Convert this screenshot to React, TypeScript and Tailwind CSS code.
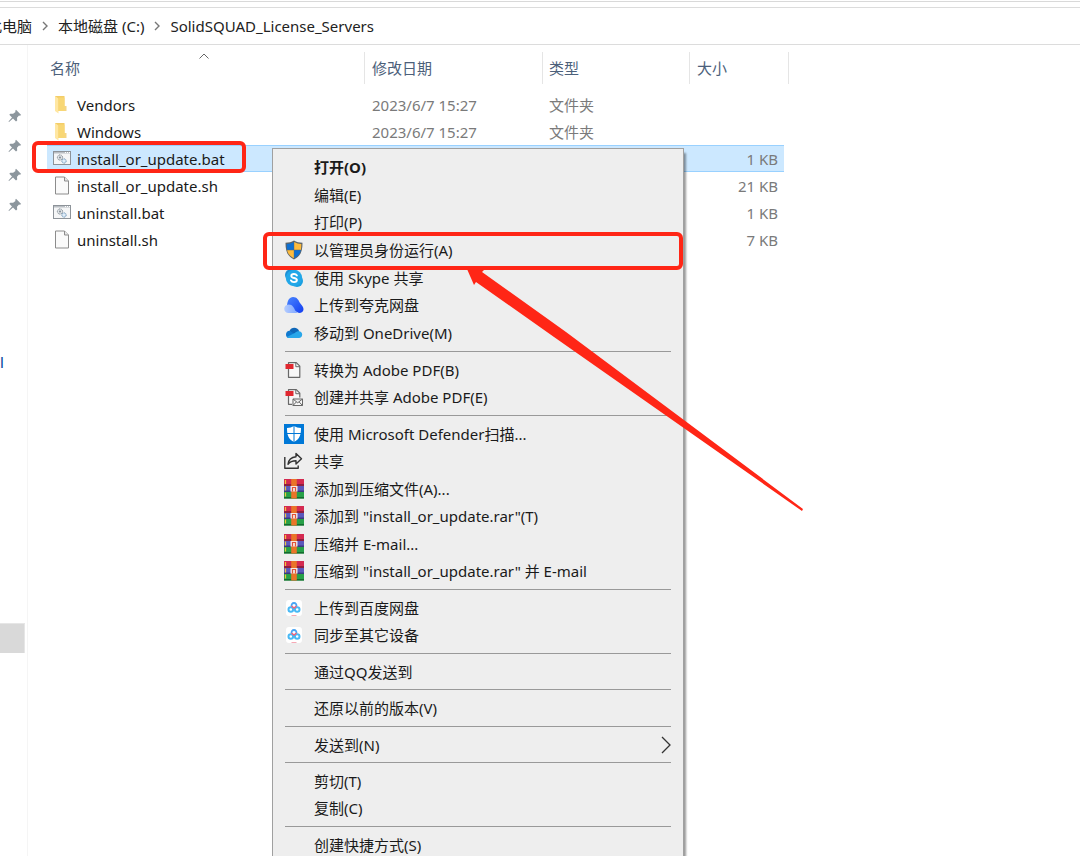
import React from 'react';

type FileRow = { name: string; kind: 'folder' | 'bat' | 'doc'; date?: string; type?: string; size?: string; selected?: boolean };

const files: FileRow[] = [
  { name: 'Vendors', kind: 'folder', date: '2023/6/7 15:27', type: '文件夹' },
  { name: 'Windows', kind: 'folder', date: '2023/6/7 15:27', type: '文件夹' },
  { name: 'install_or_update.bat', kind: 'bat', size: '1 KB', selected: true },
  { name: 'install_or_update.sh', kind: 'doc', size: '21 KB' },
  { name: 'uninstall.bat', kind: 'bat', size: '1 KB' },
  { name: 'uninstall.sh', kind: 'doc', size: '7 KB' },
];

const FolderIcon = () => (
  <svg width="18" height="19" viewBox="0 0 18 19">
    <path d="M2 1h9.500v15H2z" fill="#f3cd68" />
    <path d="M11 11h2.500v5H11z" fill="#f5d583" />
    <path d="M2 1 5.500 3.500v15L2 16z" fill="#ffe7a2" />
    <path d="M5.500 2.500h6V16h-6z" fill="#f8d775" />
  </svg>
);

const BatIcon = () => (
  <svg width="18" height="19" viewBox="0 0 18 19">
    <rect x="0.500" y="2.500" width="17" height="13" fill="#f5f6f7" stroke="#8d9399" />
    <path d="M1 3h16v1.500H1z" fill="#b9bec3" />
    <path d="M12 3.500h1M14 3.500h1M16 3.500h1" stroke="#fff" />
    <circle cx="7" cy="8.500" r="2.600" fill="#dfe4e8" stroke="#7d868e" strokeDasharray="1.200 0.600" />
    <circle cx="7" cy="8.500" r="0.900" fill="#77818a" />
    <circle cx="11" cy="12" r="2.200" fill="#cfe2f3" stroke="#7397b5" strokeDasharray="1.200 0.600" />
    <circle cx="11" cy="12" r="0.700" fill="#fff" />
  </svg>
);

const DocIcon = () => (
  <svg width="18" height="19" viewBox="0 0 18 19">
    <path d="M2.500 1h9l4 4v13h-13z" fill="#fafafa" stroke="#8c8c8c" />
    <path d="M11.500 1v4h4" fill="#e8e8e8" stroke="#8c8c8c" />
  </svg>
);

const ShieldIcon = () => (
  <svg width="20" height="20" viewBox="0 0 20 20">
    <path d="M10 .5c2.500 1.500 5.200 2.200 8.500 2.200 0 8-1.500 13.300-8.500 16.800C3 16 1.500 10.700 1.500 2.700 4.800 2.700 7.500 2 10 .5z" fill="#5d6468" />
    <path d="M9.800 2v7.800H3C2.800 8 2.700 6 2.700 4 5.500 3.900 7.600 3.200 9.800 2z" fill="#0f6fd1" />
    <path d="M10.200 2v7.800H17c.2-1.800.3-3.800.3-5.800-2.800-.1-4.900-.8-7.100-2z" fill="#fdbb3d" />
    <path d="M9.800 10.200v8C6 16.200 3.900 13.800 3.100 10.200z" fill="#fdbb3d" />
    <path d="M10.200 10.200v8c3.800-2 5.900-4.400 6.700-8z" fill="#0f6fd1" />
  </svg>
);

const SkypeIcon = () => (
  <svg width="20" height="20" viewBox="0 0 20 20">
    <circle cx="7" cy="7" r="6" fill="#1b8fd6" />
    <circle cx="13" cy="13" r="6" fill="#1a9fe0" />
    <circle cx="10" cy="10" r="8.200" fill="#22a7e8" />
    <path d="M12.900 7.400C12.200 6.300 11.200 6 10 6 8.400 6 7.300 6.700 7.300 7.900c0 2.900 5.600 1.300 5.600 4.200 0 1.300-1.300 2-2.900 2-1.500 0-2.600-.6-3.100-1.700" fill="none" stroke="#fff" strokeWidth="1.900" strokeLinecap="round" />
  </svg>
);

const QuarkIcon = () => (
  <svg width="20" height="20" viewBox="0 0 20 20">
    <defs>
      <linearGradient id="quark" x1="0" y1="0" x2="1" y2="1">
        <stop offset="0" stopColor="#4a86ff" />
        <stop offset="1" stopColor="#123df0" />
      </linearGradient>
      <linearGradient id="quarkLight" x1="0" y1="0" x2="1" y2="0">
        <stop offset="0" stopColor="#b4ccff" />
        <stop offset="1" stopColor="#7ea6ff" />
      </linearGradient>
    </defs>
    <path d="M3 12C3 5.500 5.500 2 9 2c4 0 5.500 3 7 6 2 2.500 3.500 4 3.500 6.300 0 2.200-1.800 3.700-4.500 3.700z" fill="url(#quark)" />
    <path d="M4.500 9.500c2.800 0 4 1 5.500 3.500 1.200 2.300 2 4.500 4 5H4.500C2 18 .2 16.500.2 13.800c0-2.400 1.800-4.200 4.300-4.300z" fill="url(#quarkLight)" />
  </svg>
);

const OneDriveIcon = () => (
  <svg width="20" height="20" viewBox="0 0 20 20">
    <path d="M5.500 8C6.400 5.800 8.200 4.800 10.200 4.800c2.500 0 4.300 1.400 5 3.600L10 13z" fill="#0f67b8" />
    <path d="M5.500 7.800 12.500 12 5 15C3.200 15 2 13.500 2 11.500 2 9.300 3.500 7.900 5.500 7.800z" fill="#1179cf" />
    <path d="M14.800 8.300c2 .1 3.400 1.400 3.400 3.300 0 2-1.400 3.400-3.200 3.400H5c-.9 0-1.700-.3-2.200-1l8-4c1.200-1.100 2.400-1.700 4-1.700z" fill="#29a7ea" />
  </svg>
);

const PdfIcon = ({ mail }: { mail?: boolean }) => (
  <svg width="20" height="20" viewBox="0 0 20 20">
    <path d="M4.500 17.300V2.700h7.800l3.500 3.500v11.100z" fill="#f7f7f7" stroke="#686868" strokeLinejoin="round" strokeWidth="1.200" />
    <path d="M11.800 2.700v4h4" fill="none" stroke="#686868" />
    <path d="M1.500 4h8v5h-8z" fill="#e0272f" />
    {mail && (
      <g>
        <path d="M8 10.500h11v9H8z" fill="#ededed" />
        <path d="M9 12h9.500v6.500H9zM9 12l4.700 3.800L18.500 12M9 18.500l3.300-3.500M18.500 18.500 15.200 15" fill="#f7f7f7" stroke="#686868" />
      </g>
    )}
  </svg>
);

const DefenderIcon = () => (
  <svg width="20" height="20" viewBox="0 0 20 20">
    <path d="M0 0h20v20H0z" fill="#0078d7" />
    <path d="M10 2c2 1.300 4.300 2 7 2 0 6.500-1 11-7 14C4 15 3 10.500 3 4c2.700 0 5-.7 7-2z" fill="#fff" />
    <path d="M10 2v16M3 9.500h14" stroke="#0078d7" />
  </svg>
);

const ShareIcon = () => (
  <svg width="20" height="20" viewBox="0 0 20 20" fill="none" stroke="#333" strokeWidth="1.400" strokeLinejoin="round">
    <path d="M.8 6v11.300h13.400v-2.800" />
    <path d="M12 2.500 17.500 7.800 12 13v-3.200c-3.500 0-6 .9-8 3.500.5-4.700 3.500-7.200 8-7.600z" />
  </svg>
);

const RarIcon = () => (
  <svg width="20" height="20" viewBox="0 0 20 20">
    <path d="M0 0h20v7H0z" fill="#d42a50" />
    <path d="M0 5h20v2H0z" fill="#8e1f40" />
    <path d="M0 7h20v6H0z" fill="#5b58bd" />
    <path d="M0 11.500h20V13H0z" fill="#3b3a80" />
    <path d="M0 13h20v6.500H0z" fill="#27a048" />
    <path d="M0 18h20v1.500H0z" fill="#166a2f" />
    <path d="M1.500 1v4M1.500 7.500v4M1.500 13.500v4" stroke="#f0c43c" strokeWidth="1.200" />
    <path d="M7.200 0h5.600v19.500H7.200z" fill="#ea7428" />
    <path d="M6.500 7h7v5.500h-7z" fill="#f4e9e2" />
    <path d="M8.500 12.500V8.500h3v4" fill="none" stroke="#e0523a" strokeWidth="1.200" />
  </svg>
);

const BaiduIcon = () => (
  <svg width="20" height="20" viewBox="0 0 20 20">
    <rect x="2" y="2" width="16" height="16" rx="3" fill="#fff" />
    <circle cx="6.800" cy="11.500" r="2.300" fill="none" stroke="#48b9f5" strokeWidth="2" />
    <circle cx="13.200" cy="11.500" r="2.300" fill="none" stroke="#48b9f5" strokeWidth="2" />
    <path d="M7.600 8.200a2.500 2.500 0 1 1 4.800 0" fill="none" stroke="#48a5f5" strokeWidth="1.800" />
    <path d="m7.500 8 2.500 2 2.500-2" fill="none" stroke="#f0637c" strokeWidth="1.600" />
    <path d="M7.500 17.500h5" stroke="#f6a9b5" />
  </svg>
);

const PinIcon = () => (
  <svg width="14" height="14" viewBox="0 0 14 14">
    <path d="M8 .8 13.200 6l-1.400.7-.8-.3-2 2.300.2 2.800-1.200 1L5 9.600 1 13l-.5-.5L4 8.500 1.300 5.800l1-1.100 2.800.1L7.500 3 7.200 2z" fill="#8c969d" />
  </svg>
);

const fileIcons = { folder: <FolderIcon />, bat: <BatIcon />, doc: <DocIcon /> };

type Item = { label: string; icon?: React.ReactNode; bold?: boolean; submenu?: boolean };

const groups: { height: string; items: Item[] }[] = [
  {
    height: 'h-[194px]',
    items: [
      { label: '打开(O)', bold: true },
      { label: '编辑(E)' },
      { label: '打印(P)' },
      { label: '以管理员身份运行(A)', icon: <ShieldIcon /> },
      { label: '使用 Skype 共享', icon: <SkypeIcon /> },
      { label: '上传到夸克网盘', icon: <QuarkIcon /> },
      { label: '移动到 OneDrive(M)', icon: <OneDriveIcon /> },
    ],
  },
  {
    height: 'h-[55px]',
    items: [
      { label: '转换为 Adobe PDF(B)', icon: <PdfIcon /> },
      { label: '创建并共享 Adobe PDF(E)', icon: <PdfIcon mail /> },
    ],
  },
  {
    height: 'h-[165px]',
    items: [
      { label: '使用 Microsoft Defender扫描...', icon: <DefenderIcon /> },
      { label: '共享', icon: <ShareIcon /> },
      { label: '添加到压缩文件(A)...', icon: <RarIcon /> },
      { label: '添加到 "install_or_update.rar"(T)', icon: <RarIcon /> },
      { label: '压缩并 E-mail...', icon: <RarIcon /> },
      { label: '压缩到 "install_or_update.rar" 并 E-mail', icon: <RarIcon /> },
    ],
  },
  {
    height: 'h-[55px]',
    items: [
      { label: '上传到百度网盘', icon: <BaiduIcon /> },
      { label: '同步至其它设备', icon: <BaiduIcon /> },
    ],
  },
  { height: 'h-[27px]', items: [{ label: '通过QQ发送到' }] },
  { height: 'h-7', items: [{ label: '还原以前的版本(V)' }] },
  { height: 'h-[27px]', items: [{ label: '发送到(N)', submenu: true }] },
  { height: 'h-[55px]', items: [{ label: '剪切(T)' }, { label: '复制(C)' }] },
  { height: 'h-[27px]', items: [{ label: '创建快捷方式(S)' }] },
];

const Crumb = () => (
  <svg width="6" height="10" viewBox="0 0 6 10" fill="none" stroke="#777" strokeWidth="1.400">
    <path d="m1 1 4 4-4 4" />
  </svg>
);

const AddressBar = () => (
  <header className="mt-px border-t border-[#d9d9d9] pt-[5px]">
    <nav className="flex h-[38px] items-center gap-[10px] border-y border-[#dcdcdc] text-[#222]">
      <button className="-ml-[13px]">此电脑</button>
      <Crumb />
      <button>本地磁盘 (C:)</button>
      <Crumb />
      <button>SolidSQUAD_License_Servers</button>
    </nav>
  </header>
);

const Sidebar = () => (
  <aside className="flex w-7 shrink-0 flex-col border-r border-[#f5f5f5]">
    <div className="mt-16 flex h-[103px] flex-col justify-between pl-2">
      <PinIcon />
      <PinIcon />
      <PinIcon />
      <PinIcon />
    </div>
    <span className="mt-[140px] leading-5 text-[#003d99]">l</span>
    <div className="mt-[251px] h-[30px] w-[25px] border-t border-r border-[#e6e6e6] bg-[#d9d9d9]" />
  </aside>
);

const FileTable = () => (
  <table className="ml-[19px] w-[742px] table-fixed self-start">
    <colgroup>
      <col className="w-[318px]" />
      <col className="w-[178px]" />
      <col className="w-[147px]" />
      <col className="w-[94px]" />
      <col className="w-[5px]" />
    </colgroup>
    <thead className="text-left text-[#4c607a]">
      <tr className="h-[46px] align-top">
        <th className="relative p-0 pt-[7px] font-normal">
          <button className="flex h-8 w-full items-center border-r border-[#e5e5e5] pl-[3px]">名称</button>
          <svg className="absolute top-2 left-[152px]" width="10" height="6" viewBox="0 0 10 6" fill="none" stroke="#666">
            <path d="m.5 5.500 4.500-4.500 4.500 4.500" />
          </svg>
        </th>
        <th className="p-0 pt-[7px] font-normal">
          <button className="flex h-8 w-full items-center border-r border-[#e5e5e5] pl-[7px]">修改日期</button>
        </th>
        <th className="p-0 pt-[7px] font-normal">
          <button className="flex h-8 w-full items-center border-r border-[#e5e5e5] pl-[6px]">类型</button>
        </th>
        <th className="p-0 pt-[7px] font-normal">
          <button className="flex h-8 w-full items-center pl-[7px]">大小</button>
        </th>
        <th className="p-0 pt-[7px]">
          <div className="h-8 border-r border-[#e5e5e5]" />
        </th>
      </tr>
    </thead>
    <tbody className="text-[#7a7a7a]">
      {files.map((f) => {
        const cell = f.selected ? 'h-[27px] bg-[#cce8ff] p-0 shadow-[inset_0_1px_#99d1ff,inset_0_-1px_#99d1ff]' : 'h-[27px] p-0';
        return (
          <tr key={f.name}>
            <td className={cell}>
              <div className="flex items-center gap-[6px] pl-[6px] text-[#1a1a1a]">
                {fileIcons[f.kind]}
                {f.name}
              </div>
            </td>
            <td className={cell}>
              <div className="pl-[7px]">{f.date}</div>
            </td>
            <td className={cell}>
              <div className="pl-[6px]">{f.type}</div>
            </td>
            <td className={cell}>
              <div className="pr-[6px] text-right">{f.size}</div>
            </td>
            <td className="p-0" />
          </tr>
        );
      })}
    </tbody>
  </table>
);

const ContextMenu = () => (
  <div
    role="menu"
    className="absolute top-[148px] left-[272px] w-[412px] border border-[#a0a0a0] bg-[#eee] py-1 text-[#1a1a1a] shadow-[2px_5px_2px_rgba(0,0,0,0.4)]"
  >
    {groups.map((group, i) => (
      <React.Fragment key={i}>
        {i > 0 && (
          <div role="separator" className="flex h-[9px] items-center px-3">
            <div className="h-px w-full bg-[#999]" />
          </div>
        )}
        <div className={`flex flex-col ${group.height}`}>
          {group.items.map((item) => (
            <button key={item.label} role="menuitem" className="flex min-h-0 flex-1 items-center pr-3 pl-[11px] text-left">
              <span className="mr-[10px] w-5">{item.icon}</span>
              <span className={item.bold ? 'font-bold' : ''}>{item.label}</span>
              {item.submenu && (
                <svg className="ml-auto" width="10" height="18" viewBox="0 0 10 18" fill="none" stroke="#333" strokeWidth="1.300">
                  <path d="m1 1 8 8-8 8" />
                </svg>
              )}
            </button>
          ))}
        </div>
      </React.Fragment>
    ))}
  </div>
);

// red marker boxes and the arrow drawn over the window
const Annotations = () => (
  <div className="pointer-events-none">
    <div className="absolute top-[141px] left-[32px] h-8 w-[214px] rounded-md border-4 border-[#ff2616]" />
    <div className="absolute top-[232px] left-[263px] h-[38px] w-[420px] rounded-md border-4 border-[#ff2616]" />
    <svg className="absolute top-[266px] left-[464px]" width="344" height="250" viewBox="0 0 344 250">
      <path d="M3 3 20 4 18 6 102 66 339 243 338 245 90 71 12 16 10 19z" fill="#ff2616" />
    </svg>
  </div>
);

const App = () => (
  <div className="relative flex h-screen flex-col overflow-hidden bg-white font-['Noto_Sans','Noto_Sans_CJK_SC',sans-serif] text-[15px] leading-5 whitespace-nowrap">
    <AddressBar />
    <main className="flex flex-1">
      <Sidebar />
      <FileTable />
    </main>
    <ContextMenu />
    <Annotations />
  </div>
);

export default App;
